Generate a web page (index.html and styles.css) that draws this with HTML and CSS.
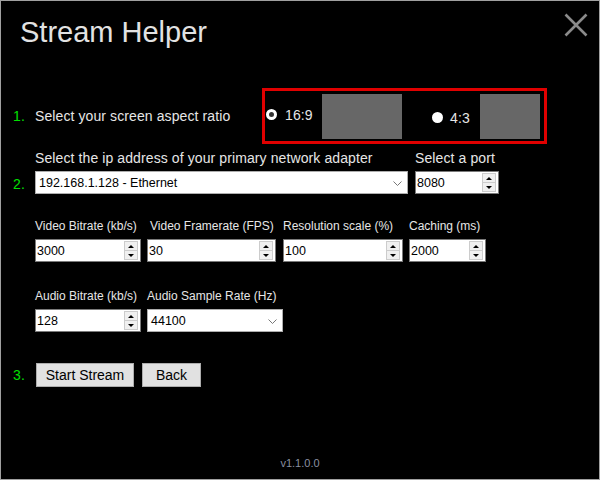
FILE: index.html
```html
<!DOCTYPE html>
<html lang="en">
<head>
    <meta charset="UTF-8">
    <title>Stream Helper</title>
    <link rel="stylesheet" href="styles.css">
</head>
<body>

    <div class="window">
        <!-- Title bar -->
        <header class="titlebar">
            <h1 class="title">Stream Helper</h1>
            <svg class="close" width="24" height="24" viewBox="0 0 24 24">
                <path d="M1.5 1.5 L22.5 22.5 M22.5 1.5 L1.5 22.5" stroke="#8a8a8a" stroke-width="2.6" fill="none"/>
            </svg>
        </header>

        <!-- Step 1: aspect ratio -->
        <section class="step step-aspect">
            <span class="num">1.</span>
            <span class="step-label">Select your screen aspect ratio</span>
            <div class="aspect-box">
                <span class="radio checked"></span>
                <span class="ratio">16:9</span>
                <span class="preview wide"></span>
                <span class="radio low"></span>
                <span class="ratio low">4:3</span>
                <span class="preview narrow"></span>
            </div>
        </section>

        <!-- Step 2: network + stream settings -->
        <section class="step step-settings">
            <span class="num num-settings">2.</span>
            <div class="rows">
                <div class="row">
                    <div class="field w-ip">
                        <span class="field-label">Select the ip address of your primary network adapter</span>
                        <div class="combo">
                            <span class="value">192.168.1.128 - Ethernet</span>
                            <svg class="chevron" width="9" height="5" viewBox="0 0 9 5"><path d="M0.5 0.5 L4.5 4.5 L8.5 0.5" stroke="#777" fill="none"/></svg>
                        </div>
                    </div>
                    <div class="field w-port">
                        <span class="field-label">Select a port</span>
                        <div class="spin">
                            <span class="value">8080</span>
                            <span class="spin-btns"><span class="up"></span><span class="down"></span></span>
                        </div>
                    </div>
                </div>

                <div class="row row-small row-gap">
                    <div class="field w-vbit">
                        <span class="field-label">Video Bitrate (kb/s)</span>
                        <div class="spin">
                            <span class="value">3000</span>
                            <span class="spin-btns"><span class="up"></span><span class="down"></span></span>
                        </div>
                    </div>
                    <div class="field w-fps">
                        <span class="field-label shifted">Video Framerate (FPS)</span>
                        <div class="spin">
                            <span class="value">30</span>
                            <span class="spin-btns"><span class="up"></span><span class="down"></span></span>
                        </div>
                    </div>
                    <div class="field w-scale">
                        <span class="field-label">Resolution scale (%)</span>
                        <div class="spin">
                            <span class="value">100</span>
                            <span class="spin-btns"><span class="up"></span><span class="down"></span></span>
                        </div>
                    </div>
                    <div class="field w-cache">
                        <span class="field-label">Caching (ms)</span>
                        <div class="spin">
                            <span class="value">2000</span>
                            <span class="spin-btns"><span class="up"></span><span class="down"></span></span>
                        </div>
                    </div>
                </div>

                <div class="row row-small row-gap-lg">
                    <div class="field w-vbit">
                        <span class="field-label">Audio Bitrate (kb/s)</span>
                        <div class="spin">
                            <span class="value">128</span>
                            <span class="spin-btns"><span class="up"></span><span class="down"></span></span>
                        </div>
                    </div>
                    <div class="field w-rate">
                        <span class="field-label">Audio Sample Rate (Hz)</span>
                        <div class="combo">
                            <span class="value">44100</span>
                            <svg class="chevron" width="9" height="5" viewBox="0 0 9 5"><path d="M0.5 0.5 L4.5 4.5 L8.5 0.5" stroke="#777" fill="none"/></svg>
                        </div>
                    </div>
                </div>
            </div>
        </section>

        <!-- Step 3: start -->
        <section class="step step-start">
            <span class="num">3.</span>
            <button class="btn btn-start">Start Stream</button>
            <button class="btn btn-back">Back</button>
        </section>

        <footer class="version">v1.1.0.0</footer>
    </div>

</body>
</html>
```

FILE: styles.css
```css
/* Global Styles */
* {
    margin: 0;
    padding: 0;
    box-sizing: border-box;
}

body {
    font-family: 'Liberation Sans', Arial, sans-serif;
    font-size: 14px;
    letter-spacing: 0.1px;
    background: #000;
}

/* Window */
.window {
    width: 600px;
    height: 480px;
    border: 1px solid #a0a0a0;
    background: #000;
    color: #e6e6e6;
    display: flex;
    flex-direction: column;
    padding-left: 12px;
}

/* Title bar */
.titlebar {
    display: flex;
    justify-content: space-between;
    align-items: flex-start;
    padding-top: 11px;
    padding-right: 11px;
}

.title {
    font-family: 'Liberation Sans', Arial, sans-serif;
    font-weight: 400;
    font-size: 29px;
    line-height: 40px;
    letter-spacing: 0;
    color: #e2e2e2;
    margin-left: 7px;
}

.close {
    margin-top: 1px;
}

/* Steps */
.step {
    display: flex;
}

.num {
    width: 22px;
    color: #00e000;
    line-height: 15px;
}

.step-label {
    width: 227px;
    line-height: 15px;
}

/* Step 1 */
.step-aspect {
    margin-top: 36px;
    align-items: center;
}

.aspect-box {
    display: flex;
    align-items: center;
    height: 56px;
    width: 285px;
    border: 3px solid #e00000;
    padding: 0 4px 0 1px;
}

.radio {
    width: 11px;
    height: 11px;
    border-radius: 50%;
    background: #fff;
    margin-top: -3px;
}

.radio.checked {
    border: 3px solid #fff;
    background: #333;
}

.radio.low {
    margin-top: 3px;
    margin-left: 30px;
}

.ratio {
    width: 45px;
    padding-left: 8px;
    margin-top: -3px;
}

.ratio.low {
    width: 37px;
    margin-top: 4px;
    padding-left: 7px;
}

.preview {
    height: 45px;
    background: #676767;
    margin-top: 1px;
}

.preview.wide {
    width: 80px;
}

.preview.narrow {
    width: 60px;
}

/* Step 2 */
.step-settings {
    margin-top: 7px;
}

.num-settings {
    padding-top: 26px;
}

.row {
    display: flex;
    gap: 6px;
}

.row-gap {
    margin-top: 25px;
}

.row-gap-lg {
    margin-top: 27px;
}

.field {
    display: flex;
    flex-direction: column;
    gap: 5px;
}

.field-label {
    line-height: 15px;
    white-space: nowrap;
}

.row-small .field-label {
    font-size: 12px;
    letter-spacing: 0;
}

.field-label.shifted {
    padding-left: 3px;
}

.w-ip { width: 373px; margin-right: 1px; }
.w-port { width: 84px; }
.w-vbit { width: 106px; }
.w-fps { width: 129px; margin-right: 1px; }
.w-scale { width: 120px; }
.w-cache { width: 77px; }
.w-rate { width: 136px; }

/* Inputs */
.combo,
.spin {
    height: 23px;
    background: #fff;
    border: 1px solid #7a7a7a;
    color: #000;
    display: flex;
    align-items: center;
    justify-content: space-between;
    font-size: 12.5px;
    letter-spacing: 0;
}

.combo {
    border-color: #adadad;
    padding: 0 5px 0 3px;
}

.spin {
    padding: 0 2px 0 1px;
}

.chevron {
    margin-top: 1px;
}

.spin-btns {
    width: 14px;
    height: 19px;
    display: flex;
    flex-direction: column;
    border: 1px solid #cccccc;
    background: #f0f0f0;
}

.spin-btns span {
    flex: 1;
    display: flex;
    align-items: center;
    justify-content: center;
}

.spin-btns .up {
    border-bottom: 1px solid #cccccc;
}

.spin-btns .up::after,
.spin-btns .down::after {
    content: "";
    border-left: 3px solid transparent;
    border-right: 3px solid transparent;
}

.spin-btns .up::after {
    border-bottom: 3px solid #000;
}

.spin-btns .down::after {
    border-top: 3px solid #000;
}

/* Step 3 */
.step-start {
    margin-top: 31px;
    align-items: center;
}

.num + .btn {
    margin-left: 1px;
}

.btn {
    height: 24px;
    font-family: 'Liberation Sans', Arial, sans-serif;
    font-size: 14px;
    background: #e1e1e1;
    border: 1px solid #adadad;
    color: #000;
    margin-right: 8px;
}

.btn-start {
    width: 98px;
}

.btn-back {
    width: 59px;
}

/* Footer */
.version {
    margin-top: auto;
    padding-bottom: 9px;
    margin-left: -12px;
    text-align: center;
    font-size: 11px;
    line-height: 13px;
    letter-spacing: 0;
    color: #8a8fa0;
}
```
